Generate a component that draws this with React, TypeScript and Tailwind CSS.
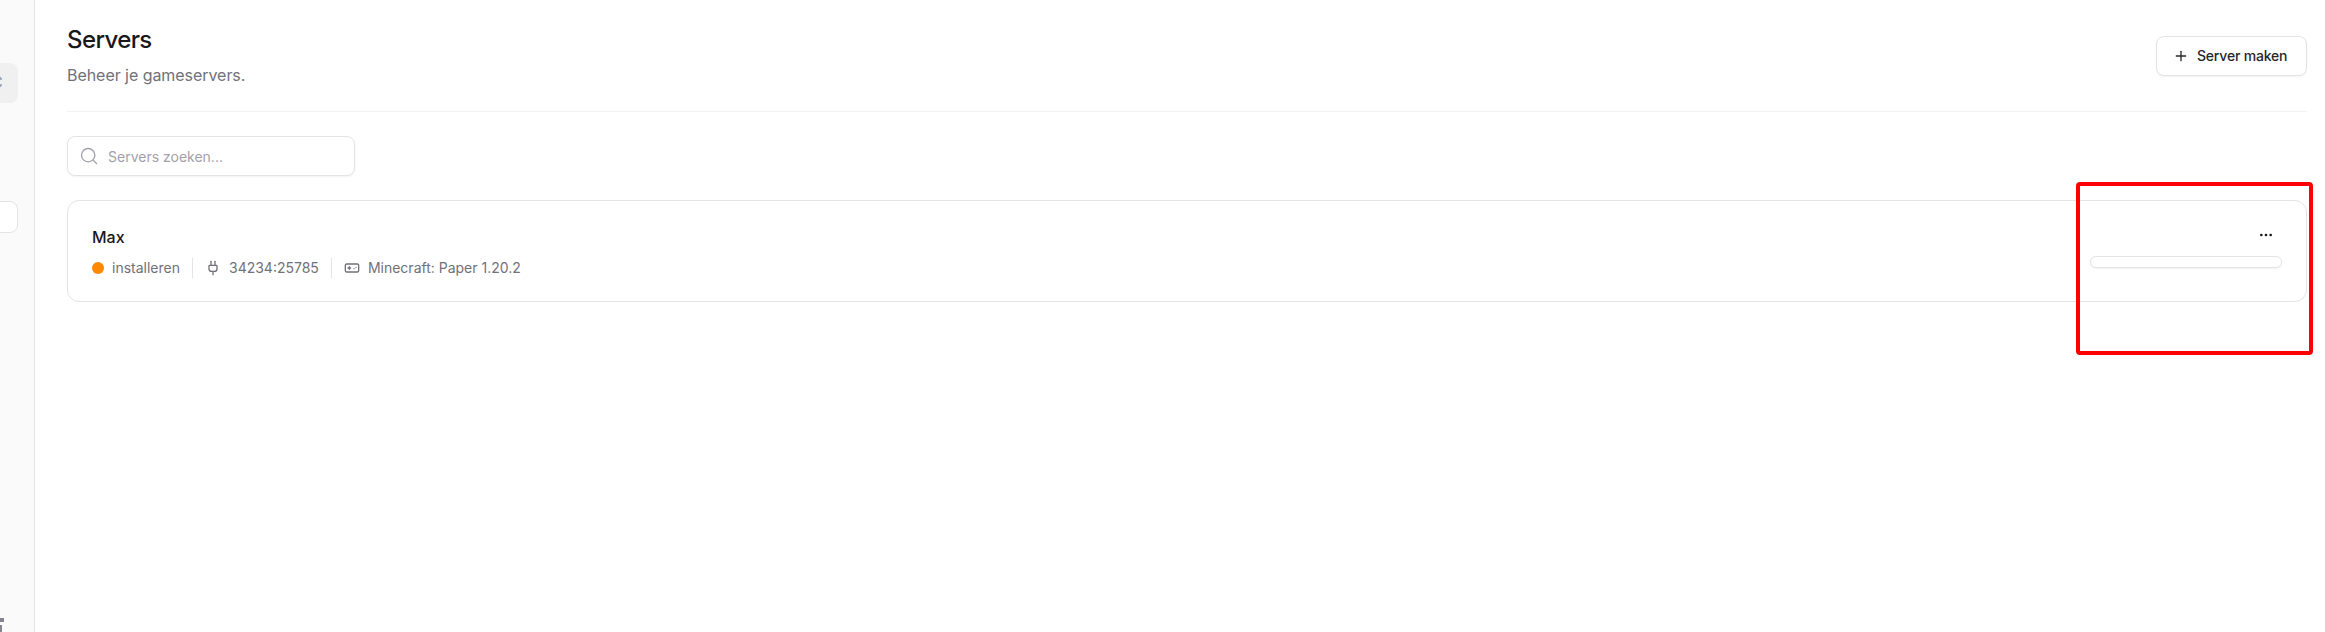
import React from "react";
import { ChevronsUpDown, Gamepad, Plug, Plus, Search, MoreHorizontal } from "lucide-react";

const Sidebar = () => {
  return (
    <aside className="relative w-[35px] shrink-0 h-[632px] overflow-hidden bg-[#fafafa] border-r border-[#e4e4e7]">
      <div className="absolute right-[16px] top-[63px] w-[60px] h-[40px] rounded-lg bg-[#f0f0f0]" />
      <ChevronsUpDown className="absolute left-[-16px] top-[70px] size-[24px] text-[#9aa3b2]" />
      <div className="absolute right-[16px] top-[201px] w-[60px] h-[32px] rounded-lg bg-white border border-[#e4e4e7]" />
      <div className="absolute left-0 top-[618px] w-[4px] h-[4px] bg-[#85858f]" />
      <div className="absolute left-0 top-[625px] w-[2px] h-[7px] bg-[#85858f]" />
    </aside>
  );
};

const Stat = ({ children, last }: { children: React.ReactNode; last?: boolean }) => {
  return (
    <div className={last ? "flex items-center gap-[8px] pl-[12px]" : "flex items-center gap-[8px] px-[12px] border-r border-[#e4e4e7] h-[20px]"}>
      {children}
    </div>
  );
};

const ServerCard = () => {
  return (
    <div className="flex justify-between rounded-xl border border-[#e4e4e7] bg-white h-[102px] pl-[24px] pr-[24px]">
      <div className="pt-[24px]">
        <h3 className="text-[16px] leading-[24px] font-medium text-[#18181b]">Max</h3>
        <div className="flex items-center mt-[9px] text-[14px] leading-[20px] text-[#71717a]">
          <div className="flex items-center gap-[8px] pr-[12px] border-r border-[#e4e4e7] h-[20px]">
            <span className="size-[12px] rounded-full bg-[#ff8800]" />
            <span>installeren</span>
          </div>
          <Stat>
            <Plug className="size-[16px] text-[#71717a]" />
            <span>34234:25785</span>
          </Stat>
          <Stat last>
            <Gamepad className="size-[16px] text-[#71717a]" />
            <span>Minecraft: Paper 1.20.2</span>
          </Stat>
        </div>
      </div>
      <div className="flex flex-col items-end w-[192px] pt-[22px]">
        <button className="size-[24px] mr-[4px] flex items-center justify-center text-[#18181b]">
          <MoreHorizontal className="size-[16px]" />
        </button>
        <div className="w-full h-[12px] mt-[9px] rounded-full bg-white border border-[#e4e4e7] shadow-xs" />
      </div>
    </div>
  );
};

export default function App() {
  return (
    <div className="relative flex h-[632px] overflow-hidden bg-white font-['Inter',sans-serif]">
      <Sidebar />
      <main className="flex-1 pl-[32px] pr-[18px] pt-[24px]">
        <div className="flex items-center justify-between pb-[24px] border-b border-[#f2f2f3]">
          <div>
            <h1 className="text-[24px] leading-[32px] font-medium tracking-tight text-[#18181b]">Servers</h1>
            <p className="mt-[7px] text-[16px] leading-[24px] tracking-[-0.05px] text-[#71717a]">Beheer je gameservers.</p>
          </div>
          <button className="flex items-center gap-[8px] h-[40px] w-[151px] pl-[16px] rounded-lg border border-[#e4e4e7] bg-white shadow-xs text-[14px] font-medium tracking-[-0.2px] text-[#27272a]">
            <Plus className="size-[16px]" />
            Server maken
          </button>
        </div>
        <div className="flex items-center gap-[9px] mt-[24px] w-[288px] h-[40px] px-[11px] rounded-lg border border-[#e4e4e7] bg-white shadow-xs">
          <Search className="size-[20px] text-[#a1a1aa]" strokeWidth={1.6} />
          <span className="text-[14px] text-[#a1a1aa]">Servers zoeken...</span>
        </div>
        <div className="mt-[24px]">
          <ServerCard />
        </div>
      </main>
      {/* annotatie uit de screenshot */}
      <div className="absolute left-[2076px] top-[182px] w-[237px] h-[173px] rounded-[4px] border-[4px] border-[#ff0000]" />
    </div>
  );
}
